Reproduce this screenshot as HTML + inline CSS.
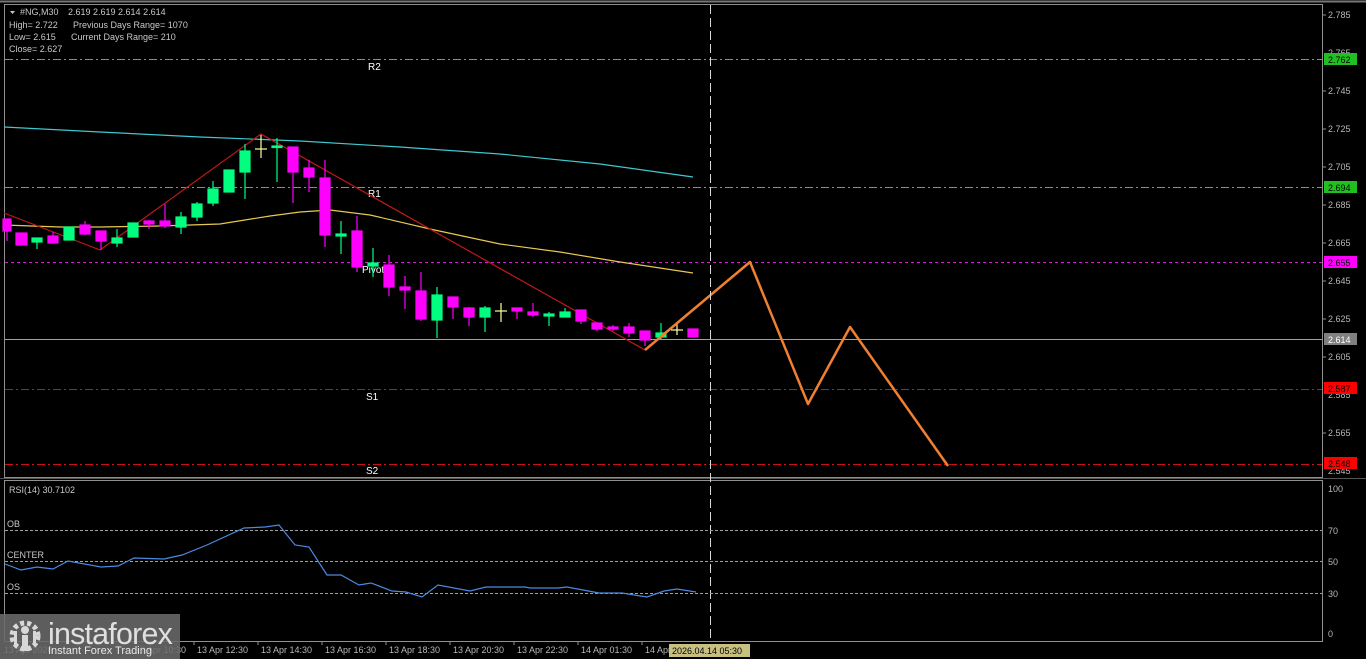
<!DOCTYPE html>
<html><head><meta charset="utf-8"><style>
html,body{margin:0;padding:0;background:#000;width:1366px;height:659px;overflow:hidden}
svg{display:block}
text{font-family:"Liberation Sans",sans-serif}
</style></head><body>
<svg width="1366" height="659" viewBox="0 0 1366 659" xmlns="http://www.w3.org/2000/svg">
<rect width="1366" height="659" fill="#000"/>
<line x1="0" y1="1.5" x2="1366" y2="1.5" stroke="#777" stroke-width="2"/>
<rect x="4.5" y="4.5" width="1318" height="473" fill="none" stroke="#909090"/>
<rect x="4.5" y="480.5" width="1318" height="161" fill="none" stroke="#909090"/>
<line x1="0" y1="478.5" x2="1366" y2="478.5" stroke="#555"/>
<g font-size="9" fill="#b8b8b8">
<text x="1328" y="18">2.785</text><text x="1328" y="56">2.765</text><text x="1328" y="94">2.745</text>
<text x="1328" y="132">2.725</text><text x="1328" y="170">2.705</text><text x="1328" y="208">2.685</text>
<text x="1328" y="246">2.665</text><text x="1328" y="284">2.645</text><text x="1328" y="322">2.625</text>
<text x="1328" y="360">2.605</text><text x="1328" y="398">2.585</text><text x="1328" y="436">2.565</text>
<text x="1328" y="474">2.545</text>
<text x="1328" y="492">100</text><text x="1328" y="534">70</text><text x="1328" y="565">50</text><text x="1328" y="597">30</text><text x="1328" y="637">0</text>
</g>
<g stroke="#909090">
<line x1="1323" y1="15" x2="1326" y2="15"/><line x1="1323" y1="91" x2="1326" y2="91"/><line x1="1323" y1="129" x2="1326" y2="129"/><line x1="1323" y1="167" x2="1326" y2="167"/><line x1="1323" y1="205" x2="1326" y2="205"/><line x1="1323" y1="243" x2="1326" y2="243"/><line x1="1323" y1="281" x2="1326" y2="281"/><line x1="1323" y1="319" x2="1326" y2="319"/><line x1="1323" y1="357" x2="1326" y2="357"/><line x1="1323" y1="433" x2="1326" y2="433"/>
</g>
<line x1="5" y1="59.5" x2="1322" y2="59.5" stroke="#40c040" stroke-dasharray="8,3,2,3"/>
<line x1="5" y1="187.5" x2="1322" y2="187.5" stroke="#40c040" stroke-dasharray="8,3,2,3"/>
<line x1="5" y1="262.5" x2="1322" y2="262.5" stroke="#d020d0" stroke-dasharray="3,3"/>
<line x1="5" y1="339.5" x2="1322" y2="339.5" stroke="#a0a0a0"/>
<line x1="5" y1="389.5" x2="1322" y2="389.5" stroke="#d01010" stroke-dasharray="8,3,2,3"/>
<line x1="5" y1="464.5" x2="1322" y2="464.5" stroke="#d01010" stroke-dasharray="8,3,2,3"/>
<rect x="1324" y="53" width="33" height="12" fill="#20c020"/><text x="1328" y="63" font-size="9" fill="#000">2.762</text>
<rect x="1324" y="181" width="33" height="12" fill="#20c020"/><text x="1328" y="191" font-size="9" fill="#000">2.694</text>
<rect x="1324" y="256" width="33" height="12" fill="#ff00ff"/><text x="1328" y="266" font-size="9" fill="#000">2.655</text>
<rect x="1324" y="333" width="33" height="12" fill="#808080"/><text x="1328" y="343" font-size="9" fill="#fff">2.614</text>
<rect x="1324" y="382" width="33" height="12" fill="#ff0000"/><text x="1328" y="392" font-size="9" fill="#000">2.587</text>
<rect x="1324" y="457" width="33" height="12" fill="#ff0000"/><text x="1328" y="467" font-size="9" fill="#000">2.548</text>
<g font-size="10" fill="#fff">
<text x="368" y="70">R2</text><text x="368" y="197">R1</text><text x="362" y="273">Pivot</text><text x="366" y="400">S1</text><text x="366" y="474">S2</text>
</g>
<g font-size="9" fill="#c8c8c8">
<path d="M10 11 L15 11 L12.5 14 Z" fill="#c8c8c8"/>
<text x="20" y="15">#NG,M30</text><text x="68" y="15">2.619 2.619 2.614 2.614</text>
<text x="9" y="28">High= 2.722</text><text x="73" y="28">Previous Days Range= 1070</text>
<text x="9" y="40">Low= 2.615</text><text x="71" y="40">Current Days Range= 210</text>
<text x="9" y="52">Close= 2.627</text>
</g>
<polyline fill="none" stroke="#40c8d0" stroke-width="1.2" points="4,127 100,132 200,137 300,141 400,147 500,154 600,164 693,177"/>
<polyline fill="none" stroke="#e8c850" stroke-width="1.2" points="4,225 60,227 100,227 160,226 220,224 270,216 300,212 330,210 370,215 430,229 500,244 560,252 620,262 693,273"/>
<polyline fill="none" stroke="#c01818" stroke-width="1.2" points="4,213 100,250 261,134 645,350"/>
<g stroke-width="1.2">
<g stroke="#ff00ff" fill="#ff00ff">
<line x1="7" y1="219" x2="7" y2="241"/><rect x="3" y="219" width="8" height="12"/>
<rect x="16" y="233" width="11" height="12"/>
<line x1="53" y1="232" x2="53" y2="243"/><rect x="48" y="236" width="10" height="7"/>
<line x1="85" y1="221" x2="85" y2="235"/><rect x="80" y="225" width="10" height="9"/>
<line x1="101" y1="231" x2="101" y2="250"/><rect x="96" y="231" width="10" height="10"/>
<line x1="149" y1="220" x2="149" y2="229"/><rect x="144" y="221" width="10" height="3"/>
<line x1="165" y1="204" x2="165" y2="228"/><rect x="160" y="221" width="10" height="5"/>
<line x1="293" y1="147" x2="293" y2="203"/><rect x="288" y="147" width="10" height="25"/>
<line x1="309" y1="160" x2="309" y2="192"/><rect x="304" y="168" width="10" height="9"/>
<line x1="325" y1="160" x2="325" y2="247"/><rect x="320" y="178" width="10" height="57"/>
<line x1="357" y1="216" x2="357" y2="272"/><rect x="352" y="231" width="10" height="36"/>
<line x1="389" y1="255" x2="389" y2="296"/><rect x="384" y="265" width="10" height="22"/>
<line x1="405" y1="276" x2="405" y2="309"/><rect x="400" y="287" width="10" height="3"/>
<line x1="421" y1="272" x2="421" y2="321"/><rect x="416" y="291" width="10" height="28"/>
<line x1="453" y1="297" x2="453" y2="319"/><rect x="448" y="297" width="10" height="10"/>
<line x1="469" y1="307" x2="469" y2="326"/><rect x="464" y="308" width="10" height="9"/>
<line x1="517" y1="308" x2="517" y2="319"/><rect x="512" y="308" width="10" height="3"/>
<line x1="533" y1="303" x2="533" y2="317"/><rect x="528" y="312" width="10" height="3"/>
<line x1="581" y1="310" x2="581" y2="324"/><rect x="576" y="310" width="10" height="11"/>
<line x1="597" y1="323" x2="597" y2="331"/><rect x="592" y="323" width="10" height="6"/>
<line x1="613" y1="325" x2="613" y2="331"/><rect x="608" y="327" width="10" height="2"/>
<line x1="629" y1="323" x2="629" y2="337"/><rect x="624" y="327" width="10" height="6"/>
<line x1="645" y1="331" x2="645" y2="346"/><rect x="640" y="331" width="10" height="9"/>
<rect x="688" y="329" width="10" height="8"/>
</g>
<g stroke="#00ff80" fill="#00ff80">
<line x1="37" y1="238" x2="37" y2="249"/><rect x="32" y="238" width="10" height="4"/>
<rect x="64" y="227" width="10" height="13"/>
<line x1="117" y1="229" x2="117" y2="247"/><rect x="112" y="238" width="10" height="5"/>
<rect x="128" y="223" width="10" height="14"/>
<line x1="181" y1="212" x2="181" y2="234"/><rect x="176" y="217" width="10" height="10"/>
<line x1="197" y1="202" x2="197" y2="221"/><rect x="192" y="204" width="10" height="13"/>
<line x1="213" y1="181" x2="213" y2="206"/><rect x="208" y="189" width="10" height="14"/>
<rect x="224" y="170" width="10" height="22"/>
<line x1="245" y1="144" x2="245" y2="199"/><rect x="240" y="151" width="10" height="21"/>
<line x1="277" y1="138" x2="277" y2="182"/><rect x="272" y="146" width="10" height="1.5"/>
<line x1="341" y1="221" x2="341" y2="254"/><rect x="336" y="234" width="10" height="2"/>
<line x1="373" y1="248" x2="373" y2="277"/><rect x="368" y="263" width="10" height="3"/>
<line x1="437" y1="287" x2="437" y2="338"/><rect x="432" y="295" width="10" height="25"/>
<line x1="485" y1="306" x2="485" y2="332"/><rect x="480" y="308" width="10" height="9"/>
<line x1="549" y1="312" x2="549" y2="326"/><rect x="544" y="314" width="10" height="2"/>
<line x1="565" y1="308" x2="565" y2="317"/><rect x="560" y="312" width="10" height="5"/>
<line x1="661" y1="323" x2="661" y2="340"/><rect x="656" y="333" width="10" height="4"/>
</g>
<g stroke="#ffffa0">
<line x1="261" y1="135" x2="261" y2="158"/><line x1="255" y1="149" x2="267" y2="149"/>
<line x1="501" y1="303" x2="501" y2="322"/><line x1="495" y1="311" x2="507" y2="311"/>
<line x1="677" y1="323" x2="677" y2="335"/><line x1="671" y1="330" x2="683" y2="330"/>
</g>
</g>
<polyline fill="none" stroke="#f08030" stroke-width="2.5" stroke-linejoin="round" points="645,350 750,262 808,404 850,327 948,466"/>
<line x1="710.5" y1="5" x2="710.5" y2="642" stroke="#d8d8d8" stroke-dasharray="9,4"/>
<text x="9" y="493" font-size="9" fill="#c8c8c8">RSI(14) 30.7102</text>
<g stroke="#a0a0a0" stroke-dasharray="3,2">
<line x1="5" y1="530.5" x2="1322" y2="530.5"/><line x1="5" y1="561.5" x2="1322" y2="561.5"/><line x1="5" y1="593.5" x2="1322" y2="593.5"/>
</g>
<g font-size="9" fill="#c8c8c8"><text x="7" y="527">OB</text><text x="7" y="558">CENTER</text><text x="7" y="590">OS</text></g>
<polyline fill="none" stroke="#4a8ae0" stroke-width="1.2" points="5,564 21,570 37,567 53,569 68,561 101,567 118,566 134,558 164,559 182,555 207,545 244,528 265,527 279,525 295,545 309,547 327,575 341,575 359,585 371,583 392,591 406,592 422,597 438,585 470,591 486,587 525,587 530,588 558,588 567,587 599,593 622,593 647,597 664,591 677,589 696,592"/>
<g font-size="9" fill="#b8b8b8">
<text x="4" y="653">13 Apr 2026</text><text x="135" y="653">13 Apr 10:30</text>
<text x="197" y="653">13 Apr 12:30</text><text x="261" y="653">13 Apr 14:30</text><text x="325" y="653">13 Apr 16:30</text>
<text x="389" y="653">13 Apr 18:30</text><text x="453" y="653">13 Apr 20:30</text><text x="517" y="653">13 Apr 22:30</text>
<text x="581" y="653">14 Apr 01:30</text><text x="645" y="653">14 Apr 03:30</text>
</g>
<g stroke="#909090"><line x1="194" y1="642" x2="194" y2="645"/><line x1="258" y1="642" x2="258" y2="645"/><line x1="322" y1="642" x2="322" y2="645"/><line x1="386" y1="642" x2="386" y2="645"/><line x1="450" y1="642" x2="450" y2="645"/><line x1="514" y1="642" x2="514" y2="645"/><line x1="578" y1="642" x2="578" y2="645"/><line x1="642" y1="642" x2="642" y2="645"/></g>
<rect x="669" y="644" width="81" height="13" fill="#c8c080"/>
<text x="672" y="654" font-size="9" fill="#000">2026.04.14 05:30</text>
<rect x="0" y="614" width="180" height="45" fill="#6a6a6a" fill-opacity="0.88"/>
<g fill="#d8d8d8">
<circle cx="25" cy="636" r="13" fill="none" stroke="#d8d8d8" stroke-width="5" stroke-dasharray="4,3"/>
<circle cx="25" cy="630" r="4"/>
<rect x="22" y="635" width="6" height="16"/>
<rect x="14" y="631" width="3" height="14"/><rect x="33" y="631" width="3" height="14"/>
</g>
<text x="48" y="644" font-size="31" fill="#e0e0e0" letter-spacing="-0.8" textLength="124" lengthAdjust="spacingAndGlyphs">instaforex</text>
<text x="48" y="654" font-size="11" fill="#e8e8e8">Instant Forex Trading</text>
</svg>
</body></html>
